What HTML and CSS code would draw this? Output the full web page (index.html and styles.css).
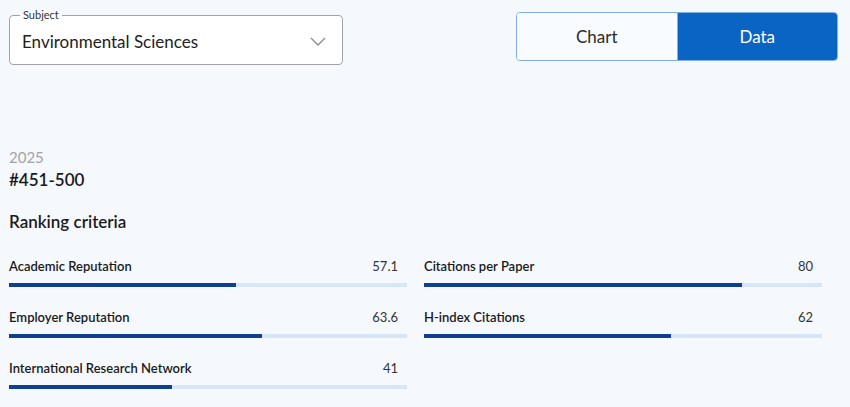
FILE: index.html
```html
<!DOCTYPE html>
<html lang="en">
<head>
    <meta charset="utf-8">
    <title>Subject ranking</title>
    <link rel="stylesheet" href="styles.css">
</head>
<body>
<div class="page">
    <div class="top">
        <fieldset class="select">
            <legend>Subject</legend>
            <div class="selectValue">
                <span>Environmental Sciences</span>
                <svg class="chevron" width="16" height="9" viewBox="0 0 16 9">
                    <path d="M1 1 L8 8 L15 1" fill="none" stroke="#8a8a8a" stroke-width="1.3"/>
                </svg>
            </div>
        </fieldset>
        <div class="toggle">
            <div class="toggleItem">Chart</div>
            <div class="toggleItem active">Data</div>
        </div>
    </div>

    <div class="year">2025</div>
    <div class="rank">#451-500</div>
    <div class="criteriaTitle">Ranking criteria</div>

    <div class="criteria">
        <div class="criterion">
            <div class="criterionHead"><span class="name">Academic Reputation</span><span class="score">57.1</span></div>
            <div class="bar"><div class="fill" style="width: 57.1%"></div></div>
        </div>
        <div class="criterion">
            <div class="criterionHead"><span class="name">Citations per Paper</span><span class="score">80</span></div>
            <div class="bar"><div class="fill" style="width: 80%"></div></div>
        </div>
        <div class="criterion">
            <div class="criterionHead"><span class="name">Employer Reputation</span><span class="score">63.6</span></div>
            <div class="bar"><div class="fill" style="width: 63.6%"></div></div>
        </div>
        <div class="criterion">
            <div class="criterionHead"><span class="name">H-index Citations</span><span class="score">62</span></div>
            <div class="bar"><div class="fill" style="width: 62%"></div></div>
        </div>
        <div class="criterion">
            <div class="criterionHead"><span class="name">International Research Network</span><span class="score">41</span></div>
            <div class="bar"><div class="fill" style="width: 41%"></div></div>
        </div>
    </div>
</div>
</body>
</html>
```

FILE: styles.css
```css
body{
    margin: 0;
    background: #f5f8fd;
    font-family: Lato, "Liberation Sans", sans-serif;
    color: #1a1a1a;
}
.page{
    padding: 0 12px 0 9px;
}
.top{
    display: flex;
    justify-content: space-between;
    align-items: flex-start;
    padding-top: 12px;
}
.select{
    width: 334px;
    height: 56px;
    box-sizing: border-box;
    margin: -3px 0 0 0;
    padding: 0 12px 0 12px;
    border: 1px solid #a3a3a3;
    border-radius: 4px;
    background: #fff;
}
.select legend{
    font-size: 11px;
    line-height: 12px;
    padding: 0 3px;
    margin-left: -2px;
    color: #333;
}
.selectValue{
    display: flex;
    justify-content: space-between;
    align-items: center;
    height: 40px;
    font-size: 17px;
    color: #222;
}
.chevron{
    margin-right: 4px;
}
.toggle{
    display: flex;
    width: 322px;
    height: 49px;
    box-sizing: border-box;
    border: 1px solid #80b0e8;
    border-radius: 4px;
    overflow: hidden;
}
.toggleItem{
    flex: 1;
    display: flex;
    align-items: center;
    justify-content: center;
    font-size: 17px;
    color: #2a2a2a;
    background: #f8fbff;
}
.toggleItem.active{
    background: #0a64c4;
    color: #fff;
    border-left: 1px solid #80b0e8;
}
.year{
    margin-top: 82px;
    font-size: 15px;
    color: #a3a3a3;
    line-height: 20px;
}
.rank{
    margin-top: 2px;
    font-size: 17px;
    font-weight: 600;
    line-height: 22px;
}
.criteriaTitle{
    margin-top: 20px;
    font-size: 17px;
    font-weight: 600;
    line-height: 22px;
}
.criteria{
    display: grid;
    grid-template-columns: 398px 398px;
    column-gap: 17px;
    row-gap: 21px;
    margin-top: 24px;
}
.criterionHead{
    display: flex;
    justify-content: space-between;
    padding-right: 9px;
    font-size: 13px;
    line-height: 18px;
}
.name{
    font-weight: 600;
}
.score{
    color: #333;
}
.bar{
    margin-top: 8px;
    height: 4px;
    background: #d6e6fa;
}
.fill{
    height: 4px;
    background: #0e3f92;
}
```
